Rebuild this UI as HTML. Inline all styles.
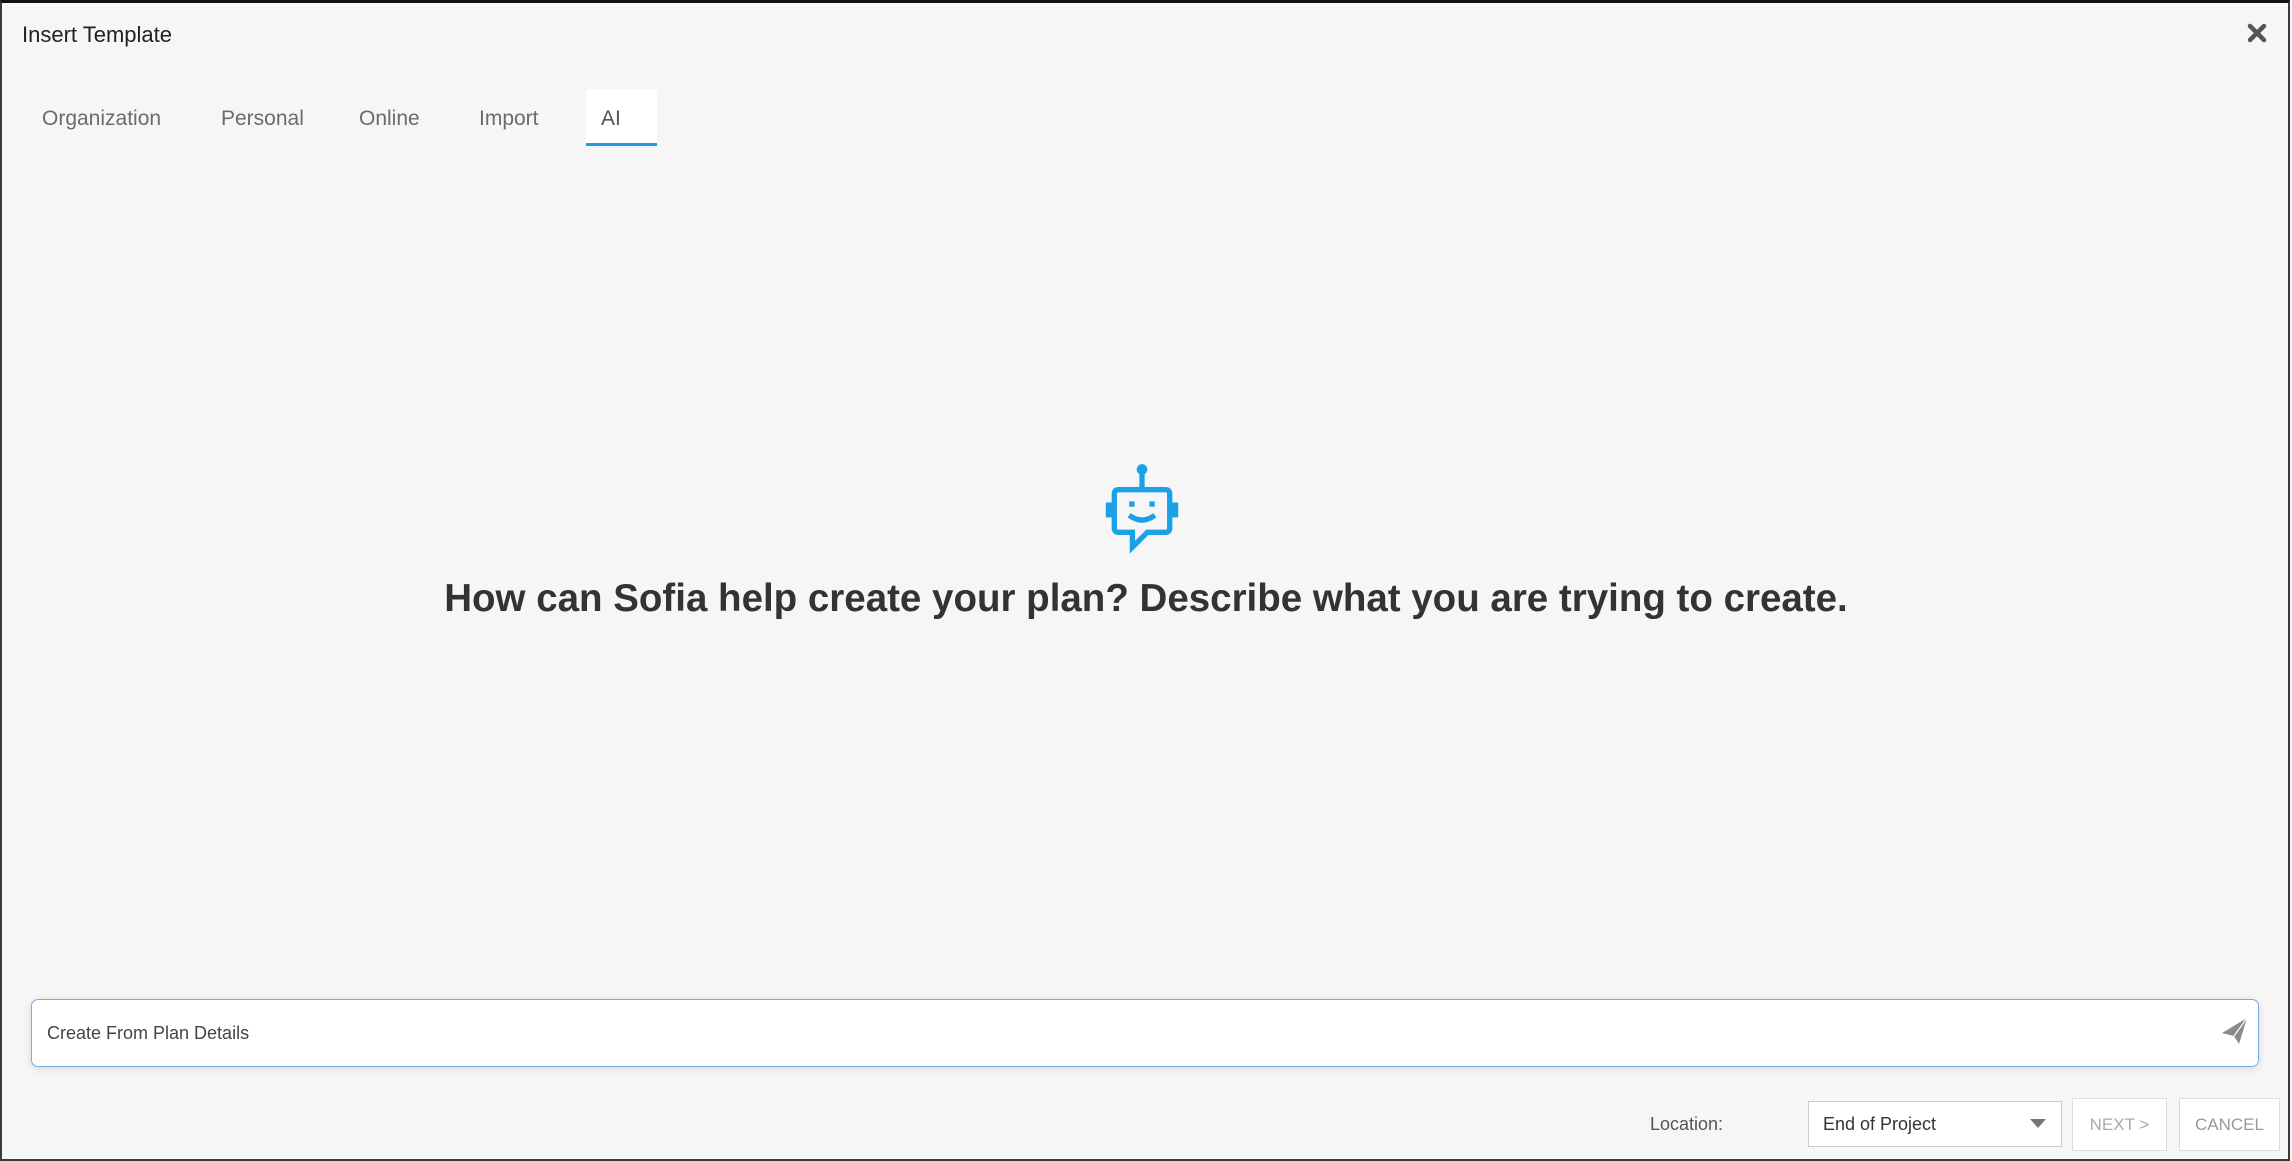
<!DOCTYPE html>
<html><head><meta charset="utf-8"><style>
html,body{margin:0;padding:0;}
body{width:2292px;height:1161px;position:relative;overflow:hidden;background:#f6f6f6;font-family:"Liberation Sans",sans-serif;}
.frame{position:absolute;left:0;top:0;width:2286px;height:1156px;border:2px solid #3a3a3a;border-top:3px solid #111;box-sizing:content-box;}
.abs{position:absolute;white-space:nowrap;}
.tab{position:absolute;top:107px;font-size:21px;color:#6b6b6b;}
</style></head><body>
<div class="frame"></div>
<div class="abs" style="left:22px;top:22px;font-size:22px;color:#222;">Insert Template</div>
<svg class="abs" style="left:2247px;top:23px" width="20" height="20" viewBox="0 0 20 20"><path d="M3 3L17 17M17 3L3 17" stroke="#555" stroke-width="4.5" stroke-linecap="round"/></svg>
<div class="tab" style="left:42px">Organization</div>
<div class="tab" style="left:221px">Personal</div>
<div class="tab" style="left:359px">Online</div>
<div class="tab" style="left:479px">Import</div>
<div class="abs" style="left:586px;top:89px;width:71px;height:54px;background:#fff;border-bottom:3px solid #1c9be6;"></div>
<div class="tab" style="left:601px;color:#555">AI</div>
<svg class="abs" style="left:1099px;top:462px" width="86" height="98" viewBox="0 0 80 92">
<g fill="none" stroke="#1ba1e8" stroke-width="5">
<path d="M40 11V25"/>
<path d="M18 26H62Q66 26 66 30V62Q66 66 62 66H45L31 80V66H18Q14 66 14 62V30Q14 26 18 26Z"/>
<path d="M28 50Q40 59 52 50"/>
</g>
<circle cx="40" cy="7" r="5" fill="#1ba1e8"/>
<rect x="6" y="38" width="6" height="14" fill="#1ba1e8"/>
<rect x="68" y="38" width="6" height="14" fill="#1ba1e8"/>
<rect x="28" y="37" width="5" height="5" fill="#1ba1e8"/>
<rect x="47" y="37" width="5" height="5" fill="#1ba1e8"/>
</svg>
<div class="abs" style="left:0;width:2292px;text-align:center;top:577px;font-size:38.5px;font-weight:bold;color:#333;">How can Sofia help create your plan? Describe what you are trying to create.</div>
<div class="abs" style="left:31px;top:999px;width:2228px;height:68px;box-sizing:border-box;background:#fff;border:1.5px solid #7aaee0;border-radius:7px;box-shadow:0 2px 8px rgba(0,0,0,0.12);"></div>
<div class="abs" style="left:47px;top:1023px;font-size:18px;color:#444;">Create From Plan Details</div>
<svg class="abs" style="left:2220px;top:1015px" width="30" height="32" viewBox="0 0 30 32"><path d="M2 18L27 3L19 29L14 21Z" fill="#8a8a8a"/><path d="M14 21L27 3" stroke="#fff" stroke-width="1.2"/></svg>
<div class="abs" style="left:1650px;top:1114px;font-size:18px;color:#555;">Location:</div>
<div class="abs" style="left:1808px;top:1101px;width:254px;height:46px;box-sizing:border-box;background:#fff;border:1px solid #ccc;"></div>
<div class="abs" style="left:1823px;top:1114px;font-size:18px;color:#333;">End of Project</div>
<svg class="abs" style="left:2030px;top:1119px" width="16" height="10" viewBox="0 0 16 10"><path d="M0 0H16L8 9Z" fill="#777"/></svg>
<div class="abs" style="left:2072px;top:1098px;width:95px;height:53px;box-sizing:border-box;background:#fff;border:1px solid #ddd;text-align:center;line-height:51px;font-size:17px;color:#aaa;">NEXT &gt;</div>
<div class="abs" style="left:2179px;top:1098px;width:101px;height:53px;box-sizing:border-box;background:#fff;border:1px solid #ddd;text-align:center;line-height:51px;font-size:17px;color:#999;">CANCEL</div>
</body></html>
